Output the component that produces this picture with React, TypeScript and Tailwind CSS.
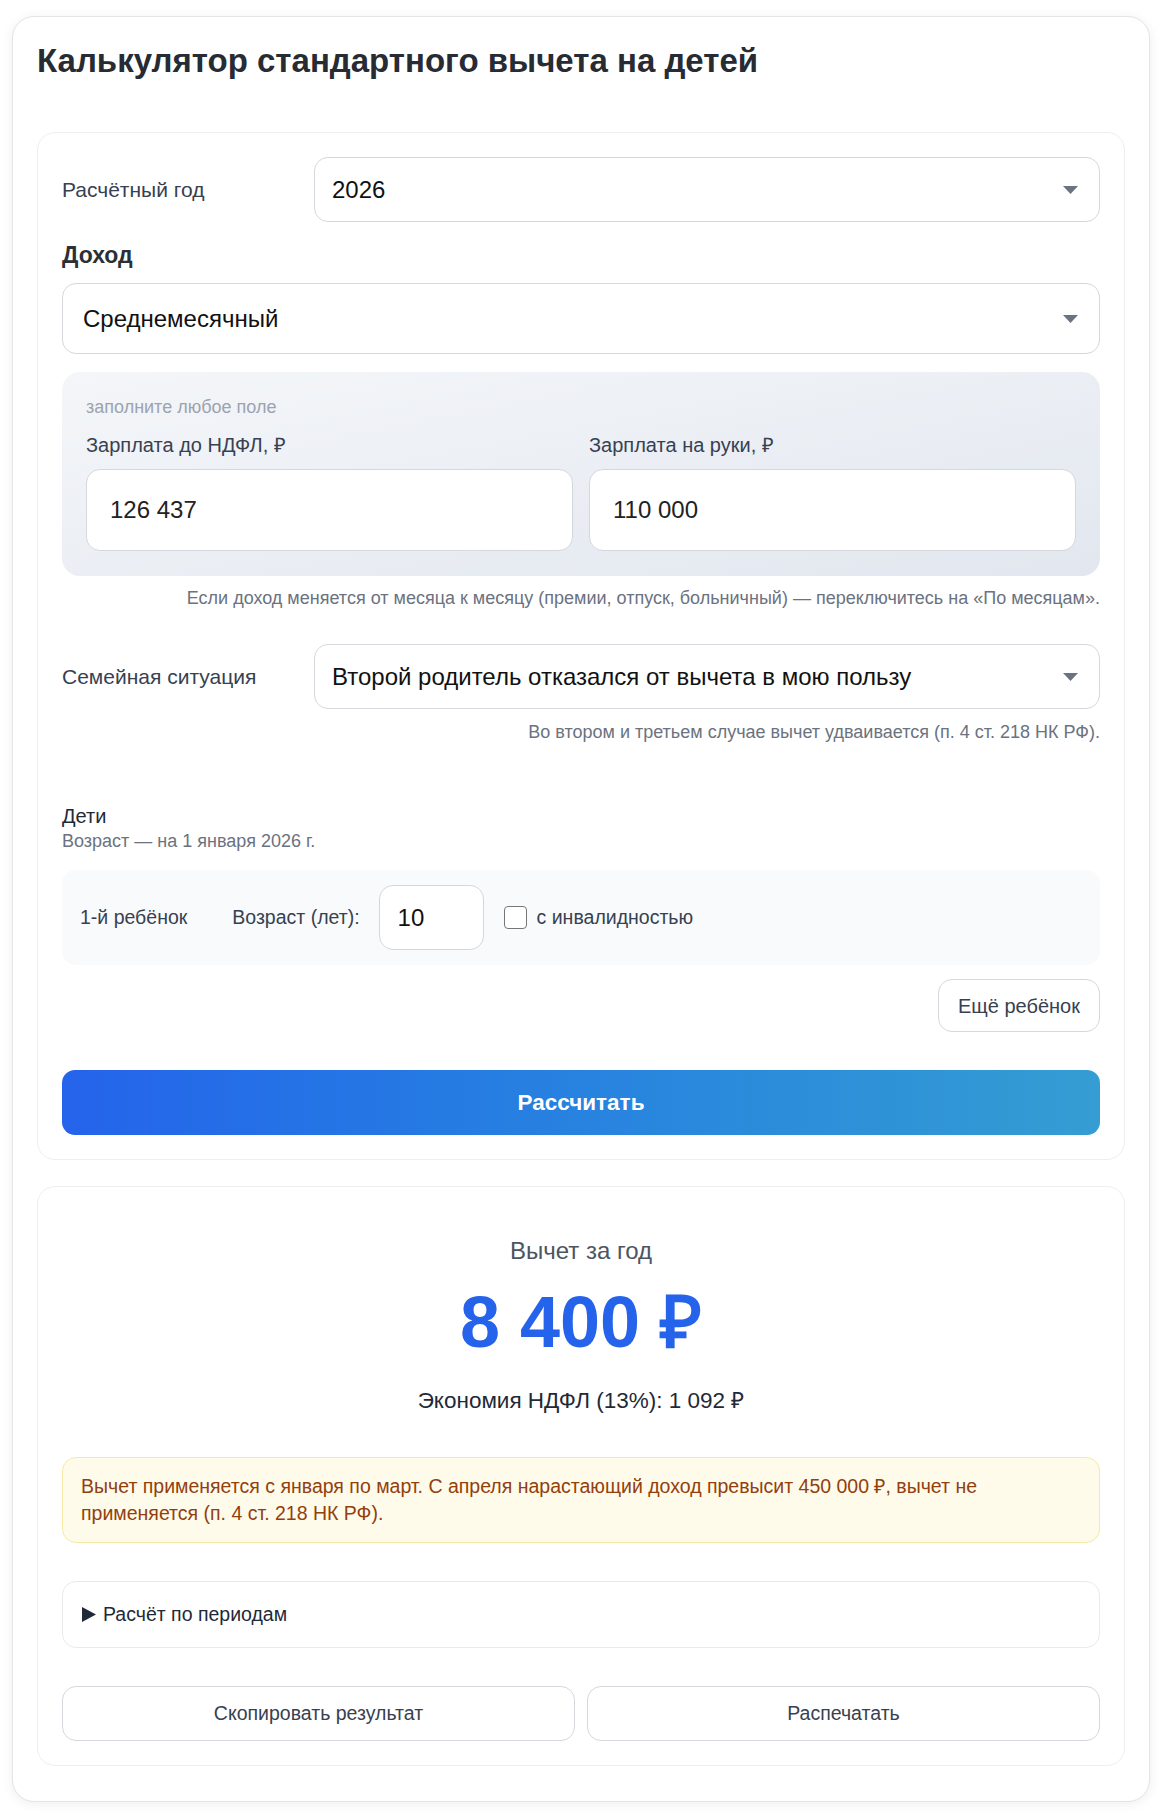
const Arrow = () => (
  <svg width="15" height="8" viewBox="0 0 15 8" className="shrink-0">
    <path d="M0 0 H15 L7.5 8 Z" fill="#6b7280" />
  </svg>
);

function Select({ value, height, pad }: { value: string; height: string; pad: string }) {
  return (
    <div
      className={`flex flex-1 items-center justify-between rounded-[14px] border border-[#d4d7dc] bg-white pr-[21px] ${height} ${pad}`}
    >
      <span className="text-[24px] leading-[30px] text-[#111111]">{value}</span>
      <Arrow />
    </div>
  );
}

function SalaryField({ label, value }: { label: string; value: string }) {
  return (
    <div className="flex flex-col">
      <span className="text-[20px] leading-[26px] text-[#374151]">{label}</span>
      <div className="mt-[11px] flex h-[82px] items-center rounded-[14px] border border-[#d4d7dc] bg-white pl-[23px] text-[24px] text-[#222222]">
        {value}
      </div>
    </div>
  );
}

export default function App() {
  return (
    <div className="min-h-screen bg-white px-3 pt-4 pb-[13px] font-['Liberation_Sans',Arial,sans-serif]">
      <div className="rounded-[22px] border border-[#e2e4e8] bg-white px-6 pt-6 pb-[35px] shadow-[0_2px_12px_rgba(0,0,0,0.07)]">
        <h1 className="mb-[51px] text-[33px] font-bold leading-[40px] text-[#272b33]">
          Калькулятор стандартного вычета на детей
        </h1>

        {/* Form */}
        <div className="rounded-[18px] border border-[#eceef1] bg-white p-6">
          <div className="flex items-center">
            <span className="w-[252px] shrink-0 text-[21px] text-[#374151]">Расчётный год</span>
            <Select value="2026" height="h-[65px]" pad="pl-[17px]" />
          </div>

          <div className="mt-[18px] mb-[13px] text-[23px] font-bold leading-[30px] text-[#2b2f36]">Доход</div>
          <div className="flex">
            <Select value="Среднемесячный" height="h-[71px]" pad="pl-[20px]" />
          </div>

          <div className="mt-[18px] rounded-[18px] bg-gradient-to-br from-[#f4f6f9] to-[#e2e7ef] px-6 pt-6 pb-[25px]">
            <div className="text-[18px] leading-[22px] text-[#9ca3af]">заполните любое поле</div>
            <div className="mt-[14px] grid grid-cols-2 gap-4">
              <SalaryField label="Зарплата до НДФЛ, ₽" value="126 437" />
              <SalaryField label="Зарплата на руки, ₽" value="110 000" />
            </div>
          </div>
          <p className="mt-[10px] text-right text-[18px] leading-[24px] text-[#6b7280]">
            Если доход меняется от месяца к месяцу (премии, отпуск, больничный) — переключитесь на «По месяцам».
          </p>

          <div className="mt-[34px] flex items-center">
            <span className="w-[252px] shrink-0 text-[21px] text-[#374151]">Семейная ситуация</span>
            <Select value="Второй родитель отказался от вычета в мою пользу" height="h-[65px]" pad="pl-[17px]" />
          </div>
          <p className="mt-[11px] text-right text-[18px] leading-[24px] text-[#6b7280]">
            Во втором и третьем случае вычет удваивается (п. 4 ст. 218 НК РФ).
          </p>

          <div className="mt-[59px] text-[20px] leading-[26px] text-[#1f2937]">Дети</div>
          <div className="mt-[1px] text-[18px] leading-[22px] text-[#6b7280]">Возраст — на 1 января 2026 г.</div>

          <div className="mt-[18px] flex items-center rounded-[14px] bg-[#f8fafc] py-[15px] pl-[18px]">
            <span className="text-[19.5px] text-[#374151]">1-й ребёнок</span>
            <span className="ml-[45px] text-[19.5px] text-[#374151]">Возраст (лет):</span>
            <div className="ml-[19px] flex h-[65px] w-[105px] items-center rounded-[14px] border border-[#d4d7dc] bg-white pl-[18px] text-[24px] text-[#111111]">
              10
            </div>
            <span className="ml-[20px] h-[23px] w-[23px] rounded-[4px] border-[1.5px] border-[#767676] bg-white" />
            <span className="ml-[10px] text-[19.5px] text-[#374151]">с инвалидностью</span>
          </div>

          <div className="mt-[14px] flex justify-end">
            <button className="h-[53px] w-[162px] rounded-[14px] border border-[#d4d7dc] bg-white text-[20px] text-[#374151]">
              Ещё ребёнок
            </button>
          </div>

          <button className="mt-[38px] h-[65px] w-full rounded-[13px] bg-gradient-to-r from-[#2563eb] to-[#359dd2] text-[22.5px] font-bold text-white">
            Рассчитать
          </button>
        </div>

        {/* Result */}
        <div className="mt-[26px] rounded-[18px] border border-[#eceef1] bg-white px-6 pt-[49px] pb-6">
          <div className="text-center text-[24px] leading-[30px] text-[#4b5563]">Вычет за год</div>
          <div className="mt-[16px] text-center text-[72px] font-bold leading-[80px] text-[#2563eb]">8 400 ₽</div>
          <div className="mt-[24px] text-center text-[22.5px] leading-[30px] text-[#1f2937]">
            Экономия НДФЛ (13%): 1 092 ₽
          </div>

          <div className="mt-[41px] rounded-[14px] border border-[#f8e8a6] bg-[#fffbea] py-[15px] pr-[24px] pl-[18px] text-[19.5px] leading-[27px] text-[#92400e]">
            Вычет применяется с января по март. С апреля нарастающий доход превысит 450 000 ₽, вычет не применяется
            (п. 4 ст. 218 НК РФ).
          </div>

          <details className="mt-[38px] rounded-[14px] border border-[#e8eaee] bg-white">
            <summary className="flex h-[65px] cursor-pointer list-none items-center pl-[19px] text-[19.5px] text-[#1f2937] [&::-webkit-details-marker]:hidden">
              <svg width="14" height="15" viewBox="0 0 14 15" className="mr-[7px]">
                <path d="M0 0 L14 7.5 L0 15 Z" fill="#1f2937" />
              </svg>
              Расчёт по периодам
            </summary>
          </details>

          <div className="mt-[38px] grid grid-cols-2 gap-3">
            <button className="h-[55px] rounded-[14px] border border-[#d4d7dc] bg-white text-[19.5px] text-[#374151]">
              Скопировать результат
            </button>
            <button className="h-[55px] rounded-[14px] border border-[#d4d7dc] bg-white text-[19.5px] text-[#374151]">
              Распечатать
            </button>
          </div>
        </div>
      </div>
    </div>
  );
}
